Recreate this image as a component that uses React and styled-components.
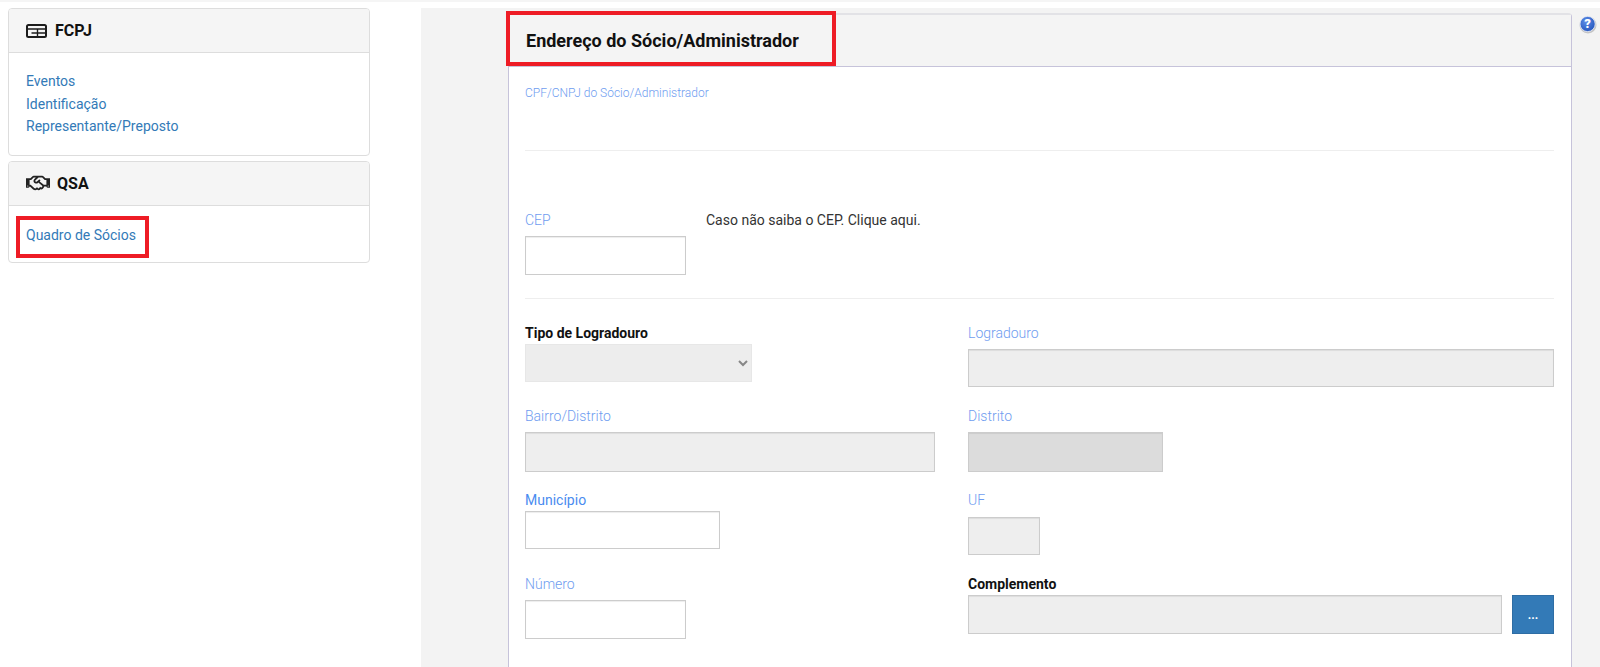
import styled, { createGlobalStyle } from 'styled-components';
import { FaRegHandshake } from 'react-icons/fa';

const GlobalStyle = createGlobalStyle`
  html, body {
    margin: 0;
    padding: 0;
    background: #fff;
    font-family: Roboto, "Liberation Sans", sans-serif;
    font-size: 14px;
    color: #333;
  }
  * { box-sizing: border-box; }
`;

const Page = styled.div`
  display: flex;
  align-items: stretch;
  height: 667px;
  overflow: hidden;
  border-top: 2px solid #f5f5f5;
  padding-top: 6px;
`;
const Sidebar = styled.aside`
  width: 362px;
  margin-left: 8px;
  flex-shrink: 0;
  display: flex;
  flex-direction: column;
  gap: 5px;
`;
const Panel = styled.div`
  background: #fff;
  border: 1px solid #ddd;
  border-radius: 4px;
  overflow: hidden;
`;
const PanelHeader = styled.div`
  height: 44px;
  background: #f5f5f5;
  border-bottom: 1px solid #ddd;
  display: flex;
  align-items: center;
  gap: ${(p) => p.$gap || 8}px;
  padding-left: 17px;
  font-size: 16px;
  font-weight: 700;
  color: #111;
  svg { flex-shrink: 0; }
`;
const PanelBody = styled.div`
  position: relative;
  padding: ${(p) => p.$top}px 17px ${(p) => p.$bottom}px;
`;
const SideLink = styled.a`
  display: block;
  line-height: 22.5px;
  color: #337ab7;
  text-decoration: none;
`;
const RedBox = styled.div`
  position: absolute;
  border: 4px solid #ee1c25;
  pointer-events: none;
`;
const LinkMark = styled(RedBox)`
  left: 7px;
  top: 10px;
  width: 133px;
  height: 42px;
`;
const TitleMark = styled(RedBox)`
  left: -3px;
  top: -4px;
  width: 330px;
  height: 55px;
`;
const Main = styled.main`
  position: relative;
  flex: 1;
  margin-left: 51px;
  background: #f3f3f3;
  padding: 5px 28px 0 87px;
`;
const HelpIcon = styled.svg`
  position: absolute;
  right: 3px;
  top: 7px;
`;
const Card = styled.section`
  position: relative;
  height: 700px;
  background: #fff;
  border: 1px solid #c6c3da;
  border-top-color: #e2e2e6;
  border-top-width: 2px;
  border-radius: 0 4px 0 0;
`;
const CardHeader = styled.div`
  height: 52px;
  background: #f4f4f4;
  border-bottom: 1px solid #c6c3da;
  display: flex;
  align-items: center;
  padding-left: 17px;
`;
const CardTitle = styled.h2`
  margin: 0;
  font-size: 18px;
  font-weight: 700;
  color: #111;
`;
const CardBody = styled.div`
  padding: 16px 17px 0 16px;
`;
const CpfBlock = styled.div`
  height: 67px;
  font-size: 12px;
  line-height: 20px;
  font-weight: 300;
  color: #6f9df0;
`;
const Divider = styled.hr`
  margin: ${(p) => p.$top}px 0 ${(p) => p.$bottom}px;
  border: 0;
  border-top: 1px solid #eee;
`;
const CepRow = styled.div`
  display: flex;
  gap: 20px;
`;
const Hint = styled.span`
  line-height: 20px;
  color: #333;
`;
const FieldGrid = styled.div`
  display: grid;
  grid-template-columns: 410px 586px;
  grid-template-rows: 83px 84px 84px 83px;
  column-gap: 33px;
  align-items: start;
`;
const Label = styled.label`
  display: block;
  line-height: 20px;
  margin-bottom: ${(p) => p.$space ?? 6}px;
  font-weight: ${(p) => (p.$kind === 'required' ? 700 : p.$kind === 'strong' ? 400 : 300)};
  color: ${(p) => (p.$kind === 'required' ? '#111' : p.$kind === 'strong' ? '#4a8cf0' : '#6f9df0')};
`;
const Input = styled.input`
  display: block;
  width: ${(p) => p.$width || '100%'};
  height: ${(p) => p.$height || 39}px;
  padding: 6px 12px;
  background: ${(p) => p.$fill || '#fff'};
  border: 1px solid #ccc;
  border-radius: 0;
  box-shadow: inset 0 1px 1px rgba(0, 0, 0, 0.075);
  outline: none;
`;
const Select = styled.select`
  display: block;
  width: 227px;
  height: 38px;
  background-color: #e6e6e6;
  border: 1px solid #ddd;
  border-radius: 0;
  color: #555;
`;
const InputGroup = styled.div`
  display: flex;
  gap: 10px;
`;
const MoreButton = styled.button`
  width: 42px;
  height: 39px;
  flex-shrink: 0;
  padding: 0;
  background: #337ab7;
  border: 1px solid #2e6da4;
  border-radius: 0;
  color: #fff;
  font-family: inherit;
  font-size: 12px;
  font-weight: 700;
`;

const TableIcon = () => (
  <svg width="21" height="14" viewBox="0 0 21 14" fill="none" stroke="#1c1c1c" strokeWidth="2">
    <rect x="1" y="1" width="19" height="12" rx="1.5" />
    <path d="M1 5h19M5.5 9h15M11.5 5v8" strokeWidth="1.4" />
  </svg>
);

const Help = () => (
  <HelpIcon width="18" height="19" viewBox="0 0 18 19">
    <defs>
      <radialGradient id="helpFill" cx="0.4" cy="0.35" r="0.75">
        <stop offset="0" stopColor="#5f8fe8" />
        <stop offset="1" stopColor="#1f4fb8" />
      </radialGradient>
    </defs>
    <circle cx="9" cy="10" r="8.5" fill="#c4c4c4" />
    <circle cx="8.6" cy="9" r="7.6" fill="url(#helpFill)" stroke="#e8eefb" strokeWidth="0.8" />
    <text x="8.6" y="13.4" textAnchor="middle" fontFamily="Roboto, sans-serif" fontSize="13" fontWeight="900" fill="#fff">?</text>
  </HelpIcon>
);

export default function App() {
  return (
    <>
      <GlobalStyle />
      <Page>
        <Sidebar>
          <Panel>
            <PanelHeader $gap={8}>
              <TableIcon />
              FCPJ
            </PanelHeader>
            <PanelBody $top={17} $bottom={17}>
              <SideLink href="#">Eventos</SideLink>
              <SideLink href="#">Identificação</SideLink>
              <SideLink href="#">Representante/Preposto</SideLink>
            </PanelBody>
          </Panel>
          <Panel>
            <PanelHeader $gap={7}>
              <FaRegHandshake size={24} color="#222" />
              QSA
            </PanelHeader>
            <PanelBody $top={18} $bottom={16}>
              <SideLink href="#">Quadro de Sócios</SideLink>
              <LinkMark />
            </PanelBody>
          </Panel>
        </Sidebar>

        <Main>
          <Help />
          <Card>
            <CardHeader>
              <CardTitle>Endereço do Sócio/Administrador</CardTitle>
            </CardHeader>
            <TitleMark />
            <CardBody>
              <CpfBlock>CPF/CNPJ do Sócio/Administrador</CpfBlock>
              <Divider $top={0} $bottom={59} />
              <CepRow>
                <div>
                  <Label>CEP</Label>
                  <Input $width="161px" />
                </div>
                <Hint>Caso não saiba o CEP. Clique aqui.</Hint>
              </CepRow>
              <Divider $top={23} $bottom={24} />
              <FieldGrid>
                <div>
                  <Label $space={1} $kind="required">Tipo de Logradouro</Label>
                  <Select disabled />
                </div>
                <div>
                  <Label>Logradouro</Label>
                  <Input disabled $fill="#eee" $height={38} />
                </div>
                <div>
                  <Label>Bairro/Distrito</Label>
                  <Input disabled $fill="#eee" $height={40} />
                </div>
                <div>
                  <Label>Distrito</Label>
                  <Input disabled $fill="#dcdcdc" $width="195px" $height={40} />
                </div>
                <div>
                  <Label $space={1} $kind="strong">Município</Label>
                  <Input $width="195px" $height={38} />
                </div>
                <div>
                  <Label $space={7}>UF</Label>
                  <Input disabled $fill="#eee" $width="72px" $height={38} />
                </div>
                <div>
                  <Label>Número</Label>
                  <Input $width="161px" />
                </div>
                <div>
                  <Label $space={1} $kind="required">Complemento</Label>
                  <InputGroup>
                    <Input disabled $fill="#eee" />
                    <MoreButton>...</MoreButton>
                  </InputGroup>
                </div>
              </FieldGrid>
            </CardBody>
          </Card>
        </Main>
      </Page>
    </>
  );
}
